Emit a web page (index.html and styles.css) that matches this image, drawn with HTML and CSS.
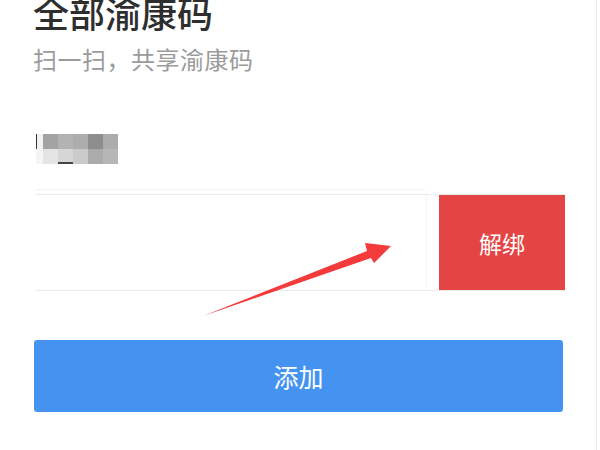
FILE: index.html
```html
<!DOCTYPE html>
<html lang="zh-CN">
<head>
<meta charset="utf-8">
<title>全部渝康码</title>
<link rel="stylesheet" href="styles.css">
</head>
<body>
<div class="screen">
  <div class="page">
    <h1 class="title">全部渝康码</h1>
    <p class="subtitle">扫一扫，共享渝康码</p>
    <div class="mosaic">
      <span class="cell c0"></span><span class="cell c1"></span><span class="cell c2"></span><span class="cell c3"></span><span class="cell c4"></span><span class="cell c5"></span>
      <span class="cell c0b"></span><span class="cell c6"></span><span class="cell c7"></span><span class="cell c8"></span><span class="cell c9"></span><span class="cell c10"></span>
    </div>
    <div class="sep"></div>
    <div class="row">
      <div class="row-main"></div>
      <div class="unbind">解绑</div>
    </div>
    <button class="add">添加</button>
  </div>
  <svg class="arrow" width="600" height="450" viewBox="0 0 600 450">
    <polygon points="203,316 367,251 365,243 391,246 374,263 371,258" fill="#f43b3b"/>
  </svg>
</div>
</body>
</html>
```
FILE: styles.css
```css
* { box-sizing: border-box; }
html, body { margin: 0; padding: 0; background: #fff; }
body { font-family: "Noto Sans CJK SC", "Noto Sans", sans-serif; }
.screen {
  position: relative;
  width: 597px;
  height: 450px;
  overflow: hidden;
  border-right: 1px solid #ececec;
}
.page {
  padding: 0 31px 0 34px;
  display: flex;
  flex-direction: column;
}
.title {
  margin: -6px 0 0 -1px;
  font-size: 36px;
  line-height: 36px;
  font-weight: 500;
  color: #2e2e2e;
}
.subtitle {
  margin: 17px 0 0 -1px;
  font-size: 24px;
  line-height: 24px;
  letter-spacing: 0.5px;
  color: #9b9b9b;
}
.mosaic {
  margin: 63px 0 0 2px;
  display: grid;
  grid-template-columns: 7px repeat(5, 15px);
  grid-template-rows: 15px 15px;
  width: 82px;
}
.cell { display: block; }
.c0 { background: #f2f2f2; border-left: 1px solid #333; }
.c0b { background: #f4f4f4; }
.c1 { background: #a3a3a3; }
.c2 { background: #b3b3b3; }
.c3 { background: #adadad; }
.c4 { background: #8d8d8d; }
.c5 { background: #acacac; }
.c6 { background: #e4e4e4; }
.c7 { background: #d6d6d6; border-bottom: 2px solid #444; }
.c8 { background: #cbcbcb; }
.c9 { background: #ababab; }
.c10 { background: #b6b6b6; }
.sep {
  margin: 25px 0 0 1px;
  width: 390px;
  height: 1px;
  background: #f4f4f4;
}
.row {
  margin: 4px 0 0 1px;
  display: flex;
  height: 97px;
  border-top: 1px solid #ebebeb;
  border-bottom: 1px solid #ebebeb;
}
.row-main {
  flex: 1;
  border-right: 1px solid #f6f6f6;
  margin-right: 12px;
}
.unbind {
  width: 126px;
  background: #e54444;
  color: #fff;
  font-size: 23px;
  display: flex;
  align-items: center;
  justify-content: center;
}
.add {
  margin: 49px 2px 0 0;
  height: 72px;
  border: none;
  border-radius: 3px;
  background: #4493f0;
  color: #fff;
  font-family: "Noto Sans CJK SC", "Noto Sans", sans-serif;
  font-size: 25px;
  padding: 0;
}
.arrow {
  position: absolute;
  left: 0;
  top: 0;
  pointer-events: none;
}
```
